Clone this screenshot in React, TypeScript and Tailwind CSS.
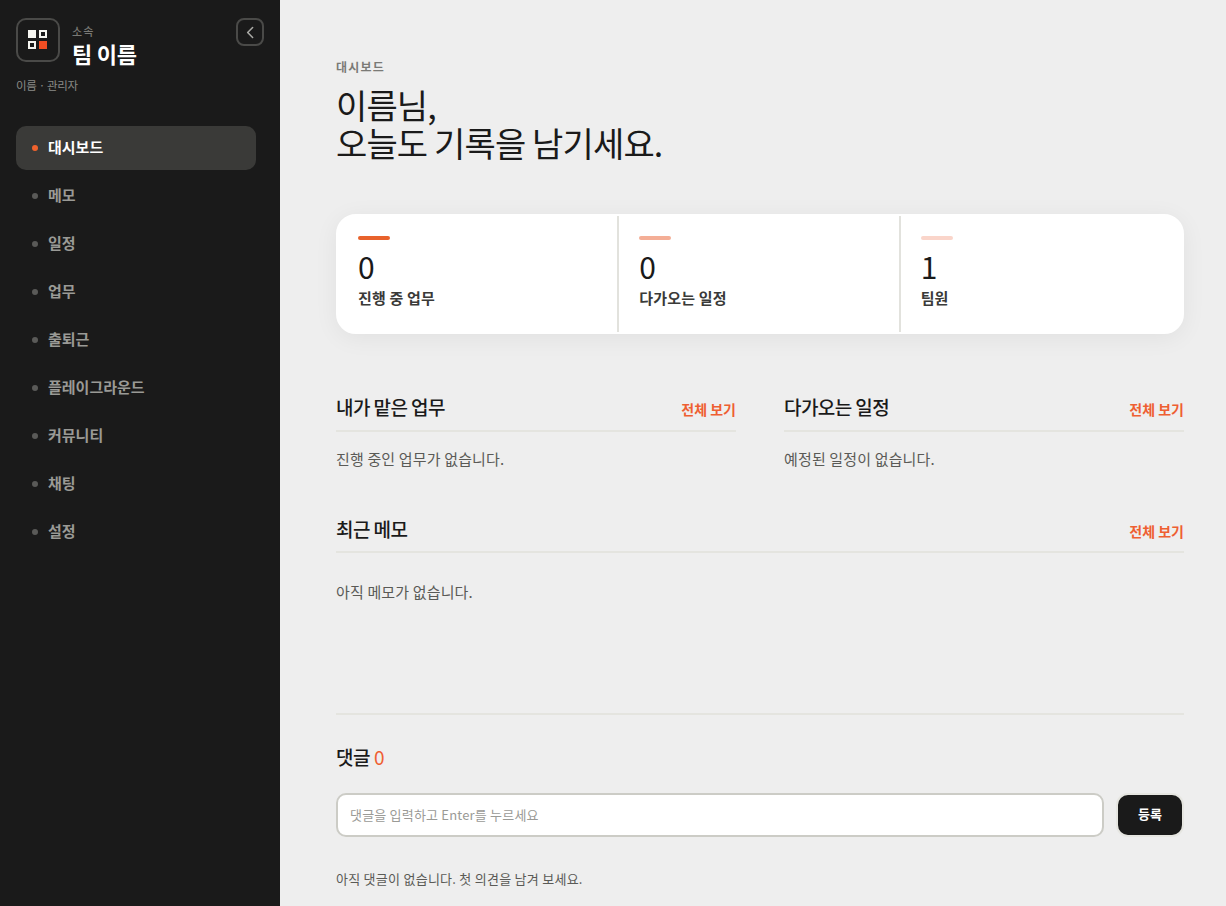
const NAV_ITEMS = ["대시보드", "메모", "일정", "업무", "출퇴근", "플레이그라운드", "커뮤니티", "채팅", "설정"];

const STATS = [
  { value: "0", label: "진행 중 업무", bar: "bg-[#e8622c]", border: "border-r-2 border-[#e2e2dd]" },
  { value: "0", label: "다가오는 일정", bar: "bg-[#f4ae96]", border: "border-r-2 border-[#e2e2dd]" },
  { value: "1", label: "팀원", bar: "bg-[#fad5ca]", border: "" },
];

function SectionHeader({ title, size = "h-[46px] pb-[2px]" }: { title: string; size?: string }) {
  return (
    <div className={`flex items-center justify-between border-b-2 border-[#e4e4df] ${size}`}>
      <h2 className="text-[19px] font-medium text-[#1a1a1a] tracking-[-0.03em]">{title}</h2>
      <a className="text-[14px] font-bold text-[#ee5f32] mt-[4px]">전체 보기</a>
    </div>
  );
}

export default function App() {
  return (
    <div className="flex h-[906px] overflow-hidden bg-[#eeeeee] font-['Noto_Sans_CJK_KR','Noto_Sans',sans-serif]">
      {/* Sidebar */}
      <aside className="relative w-[280px] shrink-0 bg-[#1a1a1a] pl-4 pr-6 pt-[18px]">
        <button className="absolute top-[18px] left-[236px] w-[28px] h-[28px] rounded-[8px] border-2 border-[#4a4a48] flex items-center justify-center text-[#aaaaa6]">
          <svg className="w-[17px] h-[17px]" fill="none" viewBox="0 0 24 24" stroke="currentColor" strokeWidth={2.2}>
            <path strokeLinecap="round" strokeLinejoin="round" d="M15 5l-7 7 7 7" />
          </svg>
        </button>

        <div className="flex items-start gap-3">
          <div className="w-[44px] h-[44px] rounded-[10px] border-2 border-[#4a4a48] flex items-center justify-center">
            <div className="grid grid-cols-2 gap-[3px] mr-[1px] mb-[1px]">
              <span className="w-[8px] h-[8px] bg-[#f5f5f0]" />
              <span className="w-[8px] h-[8px] border-2 border-[#f5f5f0]" />
              <span className="w-[8px] h-[8px] border-2 border-[#f5f5f0]" />
              <span className="w-[8px] h-[8px] bg-[#f04e23]" />
            </div>
          </div>
          <div className="mt-[6px]">
            <p className="text-[11px] leading-[14px] font-medium text-[#7a7a76] tracking-[0.1em]">소속</p>
            <p className="text-[22px] leading-[30px] font-bold text-white tracking-[-0.01em]">팀 이름</p>
          </div>
        </div>
        <p className="mt-[8px] text-[11.5px] leading-[18px] text-[#8a8a86] tracking-[-0.03em]">이름 · 관리자</p>

        <nav className="mt-[32px] flex flex-col gap-1">
          {NAV_ITEMS.map((item, i) => (
            <div
              key={item}
              className={`h-[44px] pb-[2px] rounded-[10px] flex items-center gap-[10px] px-4 text-[15px] font-bold ${
                i === 0 ? "bg-[#3a3a38] text-white" : "text-[#9a9a96]"
              }`}
            >
              <span className={`w-[6px] h-[6px] mt-[2px] rounded-full ${i === 0 ? "bg-[#f0622d]" : "bg-[#5a5a58]"}`} />
              {item}
            </div>
          ))}
        </nav>
      </aside>

      {/* Main */}
      <main className="flex-1 pl-[56px] pr-[42px] pt-[57px]">
        <p className="text-[12px] leading-[20px] font-bold text-[#7a7a76] tracking-[0.1em]">대시보드</p>
        <h1 className="mt-[9px] text-[34px] leading-[38px] font-normal text-[#1a1a1a] tracking-[-0.025em]">
          이름님,
          <br />
          오늘도 기록을 남기세요.
        </h1>

        <div className="mt-[52px] grid grid-cols-3 h-[120px] rounded-[20px] border-2 border-white bg-white shadow-[0_4px_24px_rgba(0,0,0,0.06)]">
          {STATS.map((s) => (
            <div key={s.label} className={`pl-5 pt-5 ${s.border}`}>
              <div className={`w-[32px] h-[4px] rounded-full ${s.bar}`} />
              <p className="mt-[6px] text-[30px] leading-[40px] font-normal text-[#1a1a1a]">{s.value}</p>
              <p className="mt-[2px] text-[15px] leading-[20px] font-semibold text-[#3a3a38] tracking-[0.01em]">{s.label}</p>
            </div>
          ))}
        </div>

        <div className="mt-[52px] grid grid-cols-2 gap-[48px]">
          <section>
            <SectionHeader title="내가 맡은 업무" />
            <p className="mt-[16px] text-[15px] leading-[22px] text-[#5a5a56] tracking-[0.01em]">진행 중인 업무가 없습니다.</p>
          </section>
          <section>
            <SectionHeader title="다가오는 일정" />
            <p className="mt-[16px] text-[15px] leading-[22px] text-[#5a5a56] tracking-[0.01em]">예정된 일정이 없습니다.</p>
          </section>
        </div>

        <section className="mt-[38px]">
          <SectionHeader title="최근 메모" size="h-[45px] pb-[1px]" />
          <p className="mt-[28px] text-[15px] leading-[22px] text-[#5a5a56] tracking-[0.01em]">아직 메모가 없습니다.</p>
        </section>

        <section className="mt-[110px] border-t-2 border-[#e4e4df] pt-[28px]">
          <h3 className="text-[19px] leading-[28px] font-medium text-[#1a1a1a] tracking-[-0.02em]">
            댓글 <span className="text-[#ee5f32] font-normal">0</span>
          </h3>
          <div className="mt-[22px] flex items-center gap-[12px]">
            <input
              placeholder="댓글을 입력하고 Enter를 누르세요"
              className="flex-1 h-[44px] pb-[2px] rounded-[10px] border-2 border-[#ccccc6] bg-white px-3 text-[13px] tracking-[0.015em] text-[#1a1a1a] placeholder:text-[#9a9a96] outline-none"
            />
            <button className="w-[68px] h-[44px] pb-[2px] rounded-[12px] border-2 border-[#e6e6e1] bg-[#1a1a1a] text-[13px] font-bold text-white">
              등록
            </button>
          </div>
          <p className="mt-[32px] text-[13px] leading-[20px] text-[#5a5a56] tracking-[0.02em]">아직 댓글이 없습니다. 첫 의견을 남겨 보세요.</p>
        </section>
      </main>
    </div>
  );
}
